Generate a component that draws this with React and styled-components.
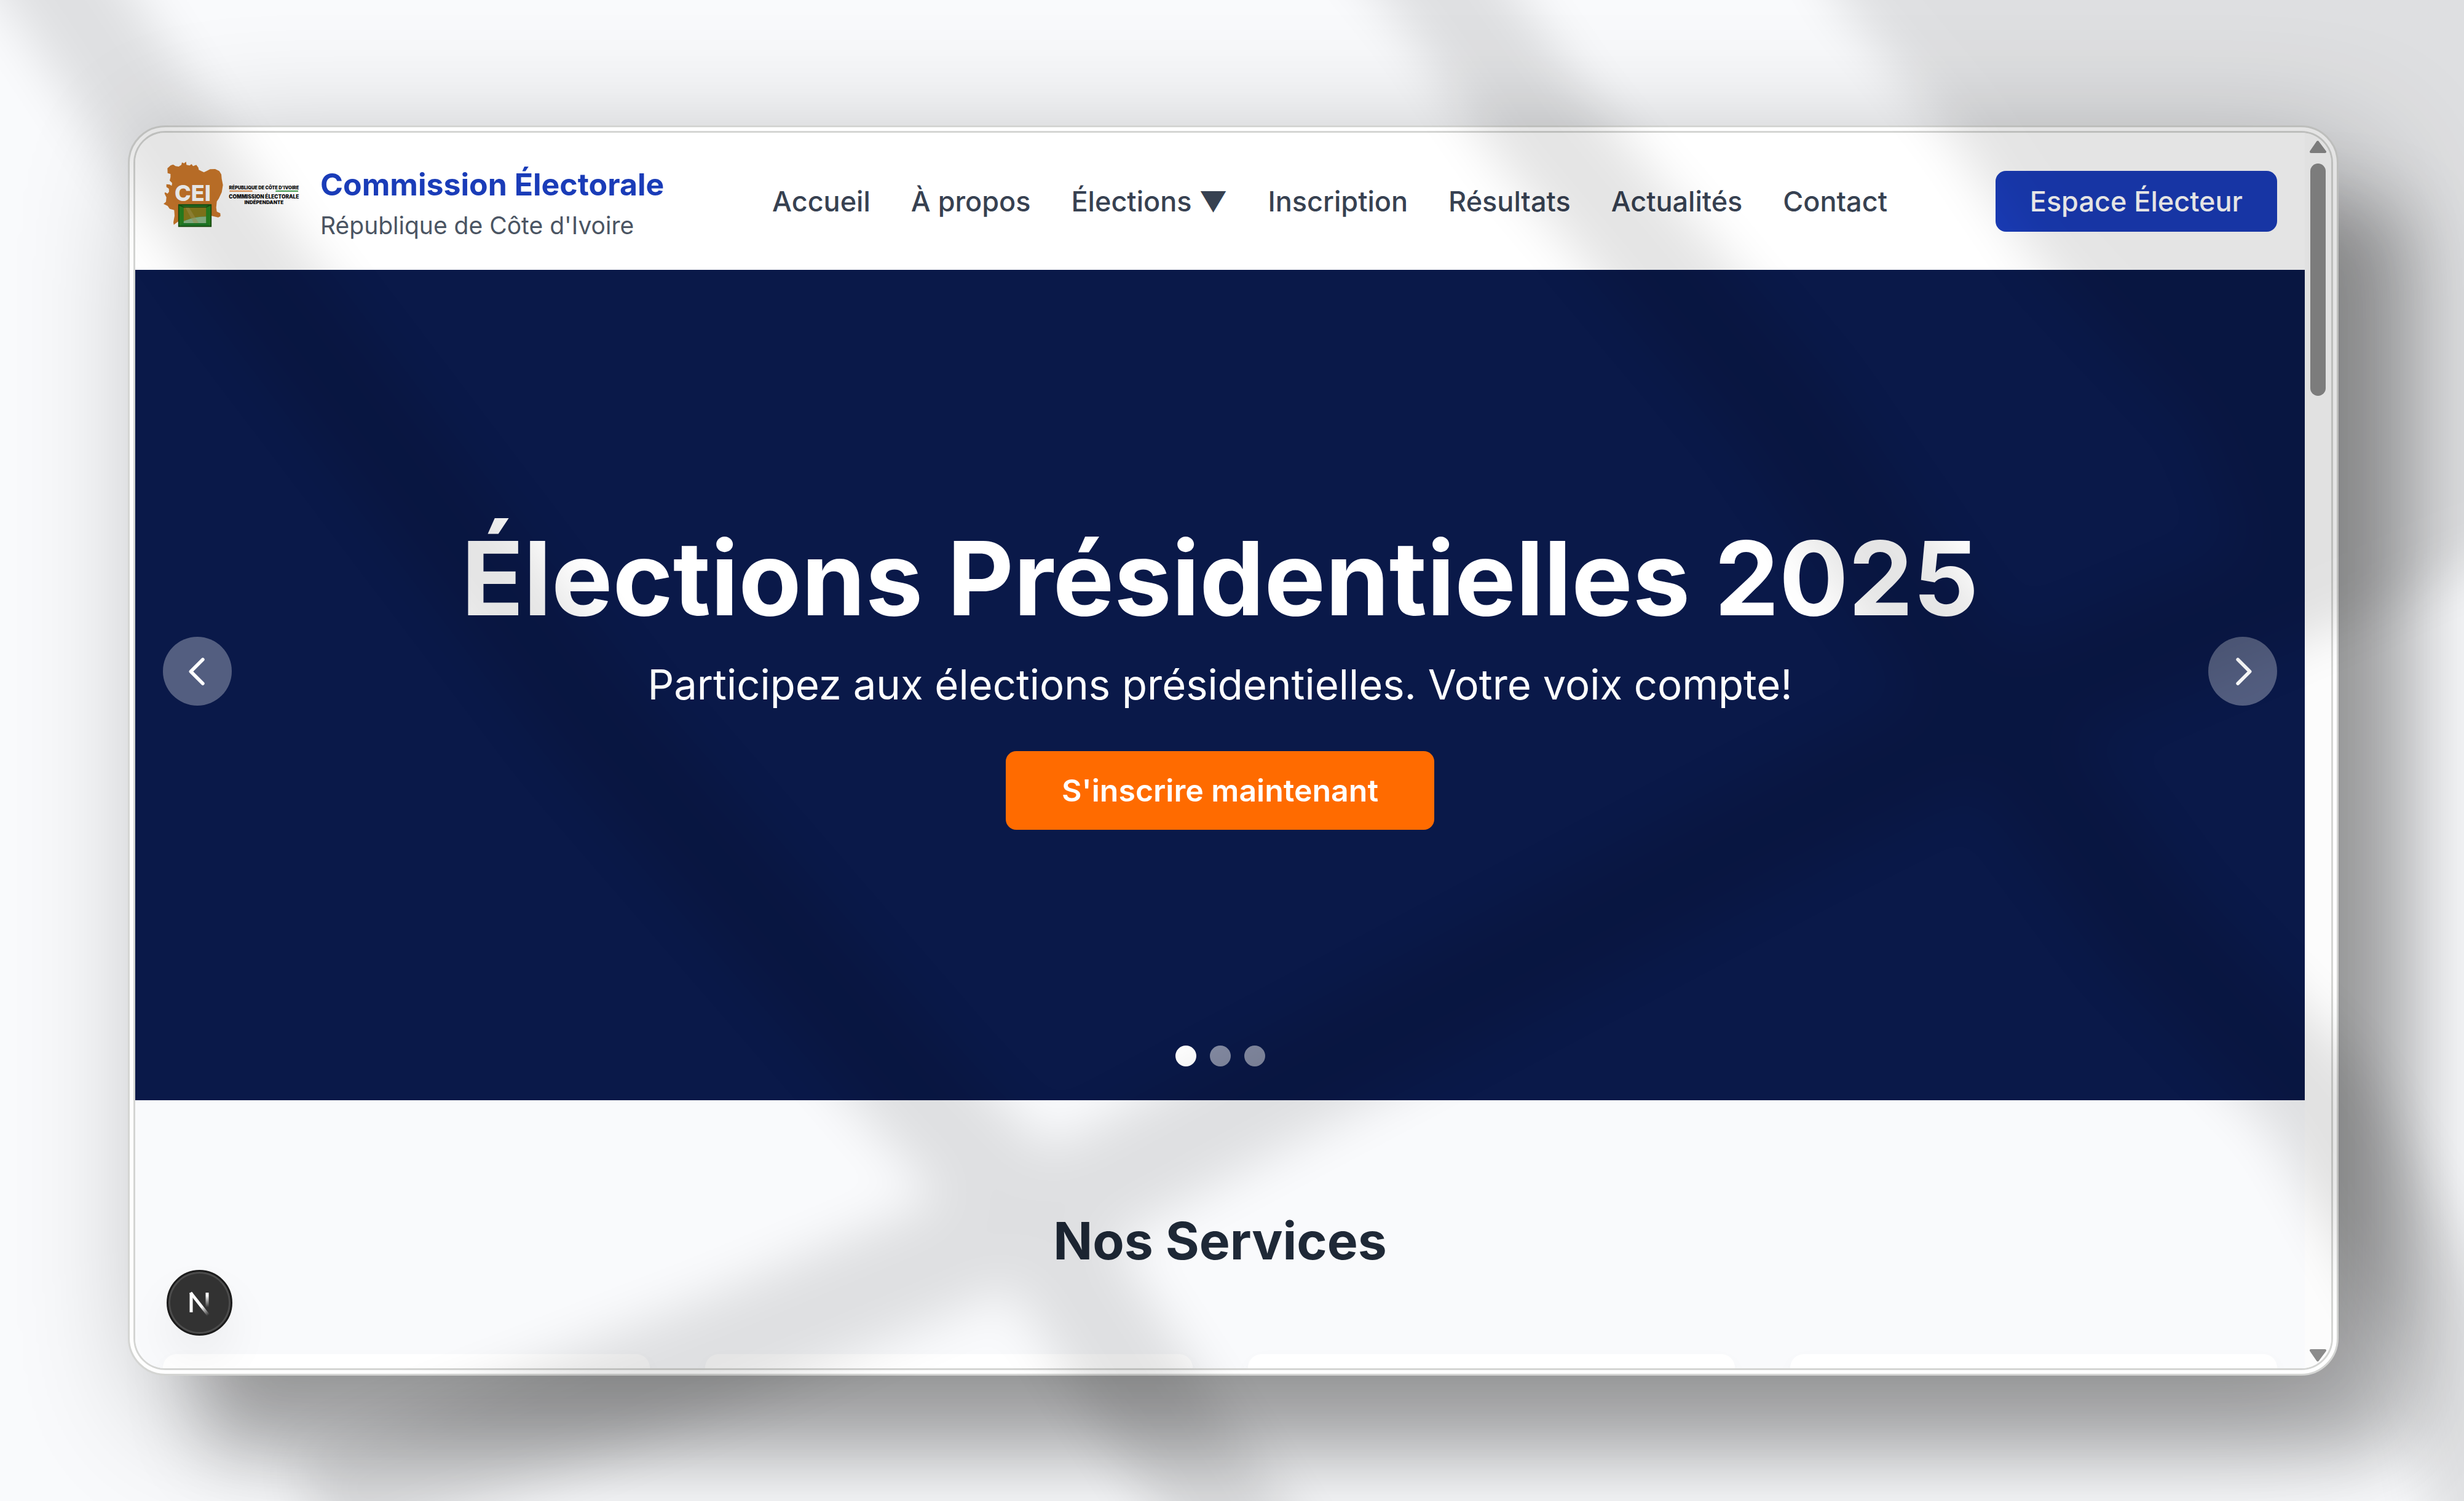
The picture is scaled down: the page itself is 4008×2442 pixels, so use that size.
import React from "react";
import styled, { createGlobalStyle } from "styled-components";

const Global = createGlobalStyle`
  *, *::before, *::after { box-sizing: border-box; }
  body {
    margin: 0;
    font-family: Inter, "Liberation Sans", sans-serif;
    -webkit-font-smoothing: antialiased;
  }
  h1, h2, p, ul { margin: 0; padding: 0; }
  button { font: inherit; border: 0; padding: 0; cursor: pointer; }
  a { color: inherit; text-decoration: none; }
`;

const Backdrop = styled.div`
  position: relative;
  display: flex;
  height: 100vh;
  padding: 204px 204px 204px 208px;
  overflow: hidden;
  background: #f9fafc;
`;

const Frame = styled.div`
  flex: 1;
  display: flex;
  min-width: 0;
  padding: 6px;
  border: 3px solid #d4d5d3;
  border-radius: 61px;
  background: #fff;
  box-shadow:
    118px 130px 120px rgba(0, 0, 0, 0.23),
    50px 50px 220px rgba(0, 0, 0, 0.3);
`;

const Screen = styled.div`
  flex: 1;
  display: flex;
  min-width: 0;
  overflow: hidden;
  border: 3px solid #d4d5d3;
  border-radius: 52px;
  background: #fff;
`;

const Page = styled.div`
  position: relative;
  flex: 1;
  display: flex;
  flex-direction: column;
  min-width: 0;
`;

const Header = styled.header`
  flex: none;
  display: flex;
  align-items: center;
  justify-content: space-between;
  height: 223px;
  padding: 0 45px;
  background: #fff;
`;

const Brand = styled.a`
  display: flex;
  align-items: center;
  gap: 33px;
`;

const Emblem = styled.svg`
  display: block;
  width: 223px;
  height: 112px;
  margin-bottom: 22px;
  overflow: visible;
`;

const BrandText = styled.span`
  display: flex;
  flex-direction: column;
`;

const BrandName = styled.span`
  color: #1a3cb8;
  font-size: 50px;
  font-weight: 700;
  line-height: 78px;
`;

const BrandNote = styled.span`
  color: #4b5563;
  font-size: 39px;
  line-height: 56px;
`;

const Nav = styled.nav`
  display: flex;
  gap: 66px;
`;

const NavLink = styled.a`
  color: #374151;
  font-size: 45px;
  font-weight: 500;
  line-height: 67px;
  white-space: nowrap;
`;

const VoterButton = styled.button`
  padding: 16px 56px;
  border-radius: 17px;
  background: #1a3cb8;
  color: #fff;
  font-size: 45px;
  font-weight: 500;
  line-height: 67px;
`;

const Hero = styled.section`
  position: relative;
  flex: none;
  display: flex;
  align-items: center;
  justify-content: space-between;
  height: 1351px;
  padding: 0 45px 45px;
  background: #0a1949;
  color: #fff;
`;

const ArrowButton = styled.button`
  display: grid;
  place-items: center;
  width: 112px;
  height: 112px;
  border-radius: 50%;
  background: rgba(255, 255, 255, 0.3);
  color: #fff;

  svg { width: 67px; height: 67px; }
`;

const HeroContent = styled.div`
  display: flex;
  flex-direction: column;
  align-items: center;
  padding-top: 22px;
  text-align: center;
`;

const HeroTitle = styled.h1`
  margin-bottom: 45px;
  font-size: 167px;
  font-weight: 700;
  line-height: 168px;
`;

const HeroText = styled.p`
  margin-bottom: 64px;
  font-size: 67px;
  line-height: 89px;
`;

const CallToAction = styled.button`
  padding: 25px 91px;
  border-radius: 17px;
  background: #ff6b00;
  color: #fff;
  font-size: 50px;
  font-weight: 600;
  line-height: 78px;
`;

const Dots = styled.div`
  position: absolute;
  right: 0;
  bottom: 55px;
  left: 0;
  display: flex;
  justify-content: center;
  gap: 22px;
`;

const Dot = styled.button`
  width: 34px;
  height: 34px;
  border-radius: 50%;
  background: ${(p) => (p.$active ? "#fff" : "rgba(255, 255, 255, 0.5)")};
`;

const Services = styled.section`
  flex: 1;
  min-height: 0;
  padding: 178px 45px 0;
  background: #f9fafc;
`;

const ServicesTitle = styled.h2`
  margin-bottom: 134px;
  color: #1f2937;
  font-size: 84px;
  font-weight: 700;
  line-height: 101px;
  text-align: center;
`;

const Cards = styled.div`
  display: grid;
  grid-template-columns: repeat(4, 1fr);
  gap: 90px;
`;

const Card = styled.article`
  height: 560px;
  border-radius: 22px;
  background: #fff;
  box-shadow: 0 10px 28px rgba(0, 0, 0, 0.03);
`;

const DevBadge = styled.button`
  position: absolute;
  bottom: 53px;
  left: 51px;
  display: grid;
  place-items: center;
  width: 107px;
  height: 107px;
  border: 3px solid #1c1c1c;
  border-radius: 50%;
  background: #323232;
  box-shadow:
    inset 0 0 0 3px #4c4c4c,
    0 40px 80px rgba(0, 0, 0, 0.06);

  svg { width: 45px; height: 45px; }
`;

const Scrollbar = styled.div`
  flex: none;
  display: flex;
  flex-direction: column;
  align-items: center;
  width: 43px;
  padding: 12px 0 10px;
  background: #fcfcfc;
  color: #8b8b8b;

  svg { display: block; width: 27px; height: 22px; }
`;

const Thumb = styled.div`
  width: 25px;
  height: 378px;
  margin-top: 16px;
  border-radius: 13px;
  background: #8b8b8b;
`;

const Spacer = styled.div`
  flex: 1;
`;

const Shade = styled.svg`
  position: absolute;
  inset: 0;
  width: 100%;
  height: 100%;
  pointer-events: none;
`;

const links = [
  "Accueil",
  "À propos",
  "Élections ▼",
  "Inscription",
  "Résultats",
  "Actualités",
  "Contact",
];

function Logo() {
  return (
    <Emblem viewBox="75 60 669 336" role="img" aria-label="CEI">
      <path
        fill="#cb782b"
        d="M97 98L113 84L125 80L137 88L152 90L165 82L168 70L178 74L188 66L190 82L205 85L215 78L222 88L238 82L248 95L250 106L262 112L275 118L288 112L305 103L330 102L350 112L360 128L362 150L368 180L362 215L348 245L338 260L335 290L338 310L355 318L356 332L345 338L310 330L310 346L152 356L128 374L126 362L132 330L130 302L108 296L98 282L78 272L90 262L92 240L83 222L85 215L98 222L105 212L104 198L92 190L92 176L108 178L118 184L120 170L108 158L112 142L112 126L98 122Z"
      />
      <path fill="#1f7d2a" d="M150 274H312V384H150Z" />
      <path fill="#8a7d1c" d="M176 286H286V334Q230 334 176 356Z" />
      <path fill="#8bb888" d="M176 356Q230 334 286 334V366H176Z" />
      <path fill="#a89a52" opacity=".5" d="M182 286H200L250 366H226Z" />
      <path fill="#2f8a1c" opacity=".6" d="M152 278L176 288V364L152 382ZM310 278L286 288V364L310 382Z" />
      <path fill="none" stroke="#1c4f10" strokeWidth="5" d="M152 277H310V382H152ZM152 277L176 288H286L310 277" />
      <text x="132" y="257" fill="#fff" fontSize="108" fontWeight="800">CEI</text>
      <g fill="#111" fontWeight="900" textAnchor="middle">
        <text x="568" y="200" fontSize="22">RÉPUBLIQUE DE CÔTE D'IVOIRE</text>
        <text x="568" y="246" fontSize="25">COMMISSION ÉLECTORALE</text>
        <text x="568" y="274" fontSize="24">INDÉPENDANTE</text>
      </g>
      <path fill="#ea9a5a" d="M400 206H512V213H400Z" />
      <path fill="#4fa25a" d="M625 206H735V213H625Z" />
    </Emblem>
  );
}

function Chevron({ d }) {
  return (
    <svg viewBox="0 0 24 24" fill="none" stroke="currentColor" strokeWidth="2" strokeLinecap="round" strokeLinejoin="round">
      <path d={d} />
    </svg>
  );
}

export default function App() {
  return (
    <Backdrop>
      <Global />
      <Frame>
        <Screen>
          <Page>
            <Header>
              <Brand href="#">
                <Logo />
                <BrandText>
                  <BrandName>Commission Électorale</BrandName>
                  <BrandNote>République de Côte d'Ivoire</BrandNote>
                </BrandText>
              </Brand>
              <Nav>
                {links.map((label) => (
                  <NavLink key={label} href="#">{label}</NavLink>
                ))}
              </Nav>
              <VoterButton type="button">Espace Électeur</VoterButton>
            </Header>
            <Hero>
              <ArrowButton type="button" aria-label="Précédent">
                <Chevron d="M15 19l-7-7 7-7" />
              </ArrowButton>
              <HeroContent>
                <HeroTitle>Élections Présidentielles 2025</HeroTitle>
                <HeroText>Participez aux élections présidentielles. Votre voix compte!</HeroText>
                <CallToAction type="button">S'inscrire maintenant</CallToAction>
              </HeroContent>
              <ArrowButton type="button" aria-label="Suivant">
                <Chevron d="M9 5l7 7-7 7" />
              </ArrowButton>
              <Dots>
                <Dot type="button" aria-label="1" $active />
                <Dot type="button" aria-label="2" />
                <Dot type="button" aria-label="3" />
              </Dots>
            </Hero>
            <Services>
              <ServicesTitle>Nos Services</ServicesTitle>
              <Cards>
                <Card />
                <Card />
                <Card />
                <Card />
              </Cards>
            </Services>
            <DevBadge type="button" aria-label="Next.js">
              <svg viewBox="0 0 45 45" fill="none" strokeWidth="5">
                <defs>
                  <linearGradient id="diag" gradientUnits="userSpaceOnUse" x1="22" y1="22" x2="38" y2="42">
                    <stop offset=".3" stopColor="#fff" />
                    <stop offset="1" stopColor="#fff" stopOpacity="0" />
                  </linearGradient>
                  <linearGradient id="stem" gradientUnits="userSpaceOnUse" x1="0" y1="6" x2="0" y2="30">
                    <stop offset=".2" stopColor="#fff" />
                    <stop offset="1" stopColor="#fff" stopOpacity="0" />
                  </linearGradient>
                </defs>
                <path stroke="#fff" d="M9 38V6" />
                <path stroke="url(#diag)" d="M8 6L38 44" />
                <path stroke="url(#stem)" d="M35 6V30" />
              </svg>
            </DevBadge>
          </Page>
          <Scrollbar aria-hidden="true">
            <svg viewBox="0 0 27 22"><path fill="currentColor" stroke="currentColor" strokeWidth="4" strokeLinejoin="round" d="M13 3L25 19H2z" /></svg>
            <Thumb />
            <Spacer />
            <svg viewBox="0 0 27 22"><path fill="currentColor" stroke="currentColor" strokeWidth="4" strokeLinejoin="round" d="M2 3H25L13 19z" /></svg>
          </Scrollbar>
        </Screen>
      </Frame>
      <Shade viewBox="0 0 1568 955" preserveAspectRatio="none" aria-hidden="true">
        <defs>
          <filter id="soft" filterUnits="userSpaceOnUse" x="-100" y="-100" width="1768" height="1155">
            <feGaussianBlur stdDeviation="16" />
          </filter>
        </defs>
        <g opacity=".1" filter="url(#soft)" fill="none" stroke="#000" strokeWidth="70" strokeLinejoin="round">
          <path d="M-15 -80L45 0L100 84L158 168L380 460L588 700L652 767L707 853L766 943L830 1040" />
          <path d="M860 -80L925 0L984 84L1055 168L1134 262L1215 380L1273 460L1369 590L1475 700L1560 850L1590 1000" />
          <path d="M1640 290L1466 370L1300 440L1135 523L800 700L707 750L600 800L470 855L200 960" />
          <path fill="#000" stroke="none" d="M1130 -80L1170 0L1240 84L1297 168L1397 274L1425 350L1460 390L1640 340V-80Z" />
        </g>
      </Shade>
    </Backdrop>
  );
}
